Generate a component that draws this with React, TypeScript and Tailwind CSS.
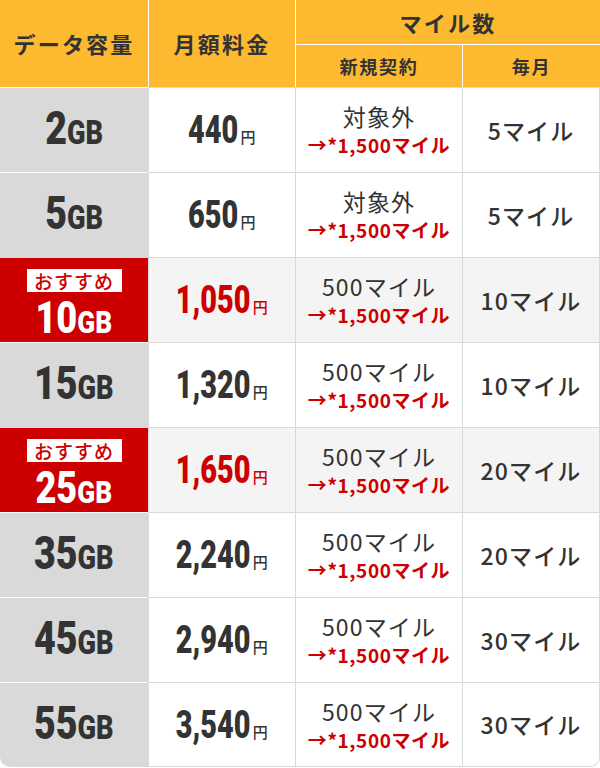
import { useLayoutEffect, useRef, useState, type ReactNode } from 'react';

const rows = [
  { gb: '2', price: '440', newc: '対象外', monthly: '5', rec: false },
  { gb: '5', price: '650', newc: '対象外', monthly: '5', rec: false },
  { gb: '10', price: '1,050', newc: '500マイル', monthly: '10', rec: true },
  { gb: '15', price: '1,320', newc: '500マイル', monthly: '10', rec: false },
  { gb: '25', price: '1,650', newc: '500マイル', monthly: '20', rec: true },
  { gb: '35', price: '2,240', newc: '500マイル', monthly: '20', rec: false },
  { gb: '45', price: '2,940', newc: '500マイル', monthly: '30', rec: false },
  { gb: '55', price: '3,540', newc: '500マイル', monthly: '30', rec: false },
];

// condensed look: squeeze Roboto horizontally and give the box its squeezed width
const Narrow = ({
  children,
  className,
  scale = 0.76,
}: {
  children: ReactNode;
  className?: string;
  scale?: number;
}) => {
  const ref = useRef<HTMLSpanElement>(null);
  const [w, setW] = useState<number | null>(null);

  useLayoutEffect(() => {
    if (ref.current) setW(ref.current.offsetWidth);
  }, []);

  return (
    <span className="inline-flex justify-center" style={w ? { width: w * scale } : undefined}>
      <span
        ref={ref}
        className={`inline-block shrink-0 whitespace-nowrap font-['Roboto',sans-serif] font-black ${className ?? ''}`}
        style={{ transform: `scaleX(${scale})` }}
      >
        {children}
      </span>
    </span>
  );
};

export default function App() {
  return (
    <div className="w-[600px] bg-white font-['Noto_Sans_CJK_JP',sans-serif] text-[#333]">
      <div className="grid grid-cols-[148px_147px_167px_138px] grid-rows-[44px_43px] bg-[#fdb92f]">
        <div className="row-span-2 flex items-center justify-center text-[22px] font-bold tracking-[0.1em]">
          データ容量
        </div>
        <div className="row-span-2 flex items-center justify-center border-l border-white text-[22px] font-bold tracking-[0.1em]">
          月額料金
        </div>
        <div className="col-span-2 flex items-center justify-center border-l border-white text-[22px] font-bold tracking-[0.1em]">
          マイル数
        </div>
        <div className="flex items-center justify-center border-l border-t border-white text-[18px] font-bold tracking-[0.1em]">
          新規契約
        </div>
        <div className="flex items-center justify-center border-l border-t border-white text-[18px] font-bold tracking-[0.1em]">
          毎月
        </div>
      </div>

      {rows.map((r, i) => {
        const last = i === rows.length - 1;
        const cellBg = r.rec ? 'bg-[#f4f4f4]' : 'bg-white';
        return (
          <div key={r.gb} className="grid h-[85px] grid-cols-[148px_147px_167px_138px]">
            <div
              className={`flex flex-col items-center border-t ${
                r.rec
                  ? 'justify-start gap-[8px] border-[#d9d9d9] bg-[#cc0000] pt-[11px] text-white'
                  : 'justify-center border-white bg-[#d9d9d9]'
              } ${last ? 'rounded-bl-[10px]' : ''}`}
            >
              {r.rec && (
                <span className="h-[23px] w-[95px] bg-white text-center text-[19px] leading-[23px] font-medium tracking-[0.05em] text-[#cc0000]">
                  おすすめ
                </span>
              )}
              {r.rec ? (
                <Narrow className="text-[44px] leading-[36px]" scale={0.82}>
                  {r.gb}
                  <span className="text-[32px]">GB</span>
                </Narrow>
              ) : (
                <Narrow className="text-[47px] leading-[46px]" scale={0.8}>
                  {r.gb}
                  <span className="text-[34px]">GB</span>
                </Narrow>
              )}
            </div>
            <div
              className={`flex items-center justify-center border-l border-t border-[#d9d9d9] ${cellBg} ${
                last ? 'border-b' : ''
              }`}
            >
              <span className={`flex items-baseline ${r.rec ? 'text-[#cc0000]' : ''}`}>
                <Narrow className="text-[38px] leading-[40px]">{r.price}</Narrow>
                <span className="ml-[2px] text-[15px] font-medium">円</span>
              </span>
            </div>
            <div
              className={`flex flex-col items-center justify-center border-l border-t border-[#d9d9d9] ${cellBg} ${
                last ? 'border-b' : ''
              }`}
            >
              <span className="text-[23px] leading-[30px] tracking-[0.05em]">{r.newc}</span>
              <span className="text-[19px] leading-[28px] font-bold tracking-[0.03em] text-[#cc0000]">
                →*1,500マイル
              </span>
            </div>
            <div
              className={`flex items-center justify-center border-x border-t border-[#d9d9d9] ${cellBg} ${
                last ? 'rounded-br-[10px] border-b' : ''
              }`}
            >
              <span className="text-[23px] font-medium tracking-[0.05em]">{r.monthly}マイル</span>
            </div>
          </div>
        );
      })}
    </div>
  );
}
